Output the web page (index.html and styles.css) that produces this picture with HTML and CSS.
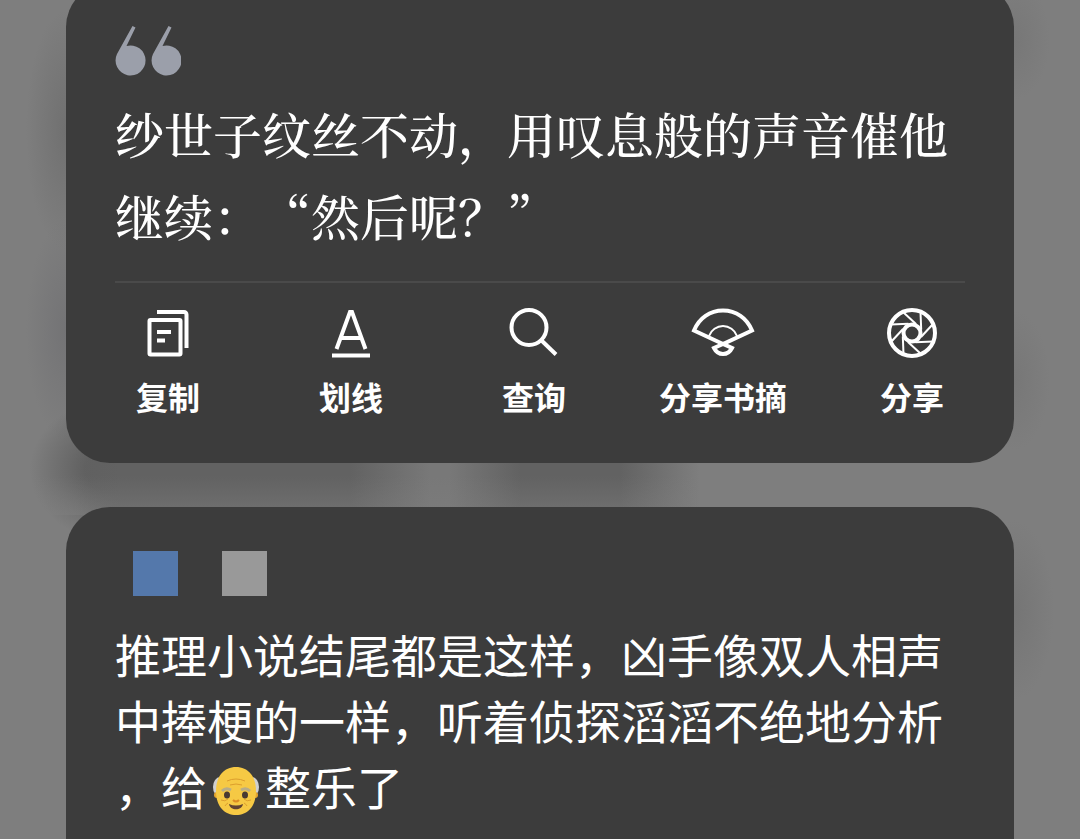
FILE: index.html
```html
<!DOCTYPE html>
<html lang="zh-CN">

<head>
  <title>书摘</title>
  <meta charset="UTF-8">
  <meta name="viewport" content="width=device-width, initial-scale=1">
  <link rel="stylesheet" href="styles.css">
</head>

<body>
  <main class="page">
    <section class="card quote">
      <svg class="quote-mark" viewBox="0 0 66 50" aria-hidden="true">
        <path d="M17.500 0l3 1.500-9 18.500A15 15 0 1 1 2 28z" />
        <path d="M53.500 0l3 1.500-9 18.500A15 15 0 1 1 38 28z" />
      </svg>
      <blockquote class="quote-text">纱世子纹丝不动，用叹息般的声音催他继续：“然后呢？”</blockquote>
      <div class="actions">
        <button class="action" type="button">
          <svg class="icon" viewBox="0 0 50 50" aria-hidden="true">
            <rect x="6.500" y="12" width="31" height="34.500" rx="1" />
            <path d="M14 4h27a2.500 2.500 0 0 1 2.500 2.500v33.500M14 24h14M14 32.500h8" />
          </svg>
          <span>复制</span>
        </button>
        <button class="action" type="button">
          <svg class="icon" viewBox="0 0 50 50" aria-hidden="true">
            <path d="M10.500 41L24 4h2l13.500 37M15 30h20M6 47.500h38" />
          </svg>
          <span>划线</span>
        </button>
        <button class="action" type="button">
          <svg class="icon" viewBox="0 0 50 50" aria-hidden="true">
            <circle cx="20" cy="19.500" r="17.500" />
            <path d="M32 32l15 14.500" />
          </svg>
          <span>查询</span>
        </button>
        <button class="action" type="button">
          <svg class="icon icon-wide" viewBox="0 0 64 50" aria-hidden="true">
            <path d="M32 36L3 22.500C8 10 19 2.500 32 2.500S56 10 61 22.500zM32 36l-9 4c2 4 5 6 9 6s7-2 9-6z" />
            <path class="thin" d="M18 28c2-6 8-10 14-10s12 4 14 10" />
          </svg>
          <span>分享书摘</span>
        </button>
        <button class="action" type="button">
          <svg class="icon" viewBox="0 0 50 50" aria-hidden="true">
            <circle cx="25" cy="25" r="23" />
            <circle cx="25" cy="25" r="8.500" />
            <g class="thin">
              <path d="M16 4l13 12" />
              <path d="M16 4l13 12" transform="rotate(45 25 25)" />
              <path d="M16 4l13 12" transform="rotate(90 25 25)" />
              <path d="M16 4l13 12" transform="rotate(135 25 25)" />
              <path d="M16 4l13 12" transform="rotate(180 25 25)" />
              <path d="M16 4l13 12" transform="rotate(225 25 25)" />
              <path d="M16 4l13 12" transform="rotate(270 25 25)" />
              <path d="M16 4l13 12" transform="rotate(315 25 25)" />
            </g>
          </svg>
          <span>分享</span>
        </button>
      </div>
    </section>

    <section class="card note">
      <div class="marks">
        <span class="mark mark-blue"></span>
        <span class="mark mark-gray"></span>
      </div>
      <p class="note-text">推理小说结尾都是这样，凶手像双人相声中捧梗的一样，听着侦探滔滔不绝地分析，给<svg class="emoji" viewBox="0 0 46 48" role="img" aria-label="老爷爷">
          <ellipse cx="7" cy="20" rx="7" ry="10" fill="#d0d0d0" />
          <ellipse cx="39" cy="20" rx="7" ry="10" fill="#d0d0d0" />
          <circle cx="4" cy="28" r="3" fill="#e5a52e" />
          <circle cx="42" cy="28" r="3" fill="#e5a52e" />
          <path d="M23 0C11 0 3 9 3 24c0 16 9 24 20 24s20-8 20-24C43 9 35 0 23 0z" fill="#f6c944" />
          <path d="M14 14q9-4 18 0M17 18q6-2 12 0M8 33q4 2 7-1M38 33q-4 2-7-1M15 36q-2 1-3 3M31 36q2 1 3 3" fill="none" stroke="#dc9e2d" />
          <path d="M9 24q4-4 9-1M28 23q5-3 9 1" fill="none" stroke="#b9ad86" stroke-width="3" />
          <ellipse cx="14" cy="28" rx="3" ry="3.500" fill="#493a32" />
          <ellipse cx="32" cy="28" rx="3" ry="3.500" fill="#493a32" />
          <path d="M20 33q3 3 6 0" fill="none" stroke="#dc8d25" stroke-width="2" />
          <path d="M16 37q7 3 14 0c-1 7-13 7-14 0z" fill="#614332" />
        </svg>整乐了</p>
    </section>
  </main>
</body>

</html>
```
FILE: styles.css
```css
* {
  margin: 0;
  padding: 0;
  box-sizing: border-box;
}

body {
  min-height: 100vh;
  overflow: hidden;
  color: #fff;
  font-family: "Noto Sans CJK SC", sans-serif;
  text-spacing-trim: space-all;
  /* blurred page showing through behind the cards */
  background:
    linear-gradient(#7e7e7e00 40%, #7e7e7e80) 0 450px / 100% 65px no-repeat,
    linear-gradient(90deg, #62626200 76px, #626262 120px, #626262 350px, #787878 430px, #787878 450px, #626262 520px, #626262 620px, #62626200 700px) 0 450px / 100% 65px no-repeat,
    radial-gradient(ellipse 80px 70px at 110px 470px, #606060 30%, #60606000),
    radial-gradient(ellipse 40px 120px at 66px 130px, #707070, #70707000),
    radial-gradient(ellipse 40px 110px at 66px 330px, #737375, #73737500),
    radial-gradient(ellipse 36px 60px at 1014px 40px, #777, #7770),
    radial-gradient(ellipse 36px 70px at 1014px 380px, #777, #7770),
    radial-gradient(ellipse 40px 90px at 1014px 610px, #757575, #75757500),
    #7e7e7e;
}

.page {
  display: flex;
  flex-direction: column;
  gap: 44px;
  margin-top: -17px;
  padding: 0 66px;
}

.card {
  padding: 43px 49px;
  border-radius: 44px;
  background-color: #3c3c3c;
}

.quote-mark {
  display: block;
  width: 66px;
  height: 50px;
  fill: #9b9faa;
}

.quote-text {
  margin-top: 16px;
  padding-bottom: 25px;
  border-bottom: 2px solid #4a4a4a;
  font-family: "Noto Serif CJK SC", "Noto Sans CJK SC", serif;
  font-size: 49px;
  font-weight: 500;
  line-height: 82px;
}

.actions {
  display: grid;
  grid-template-columns: repeat(3, minmax(0, 106fr)) minmax(0, 118fr) minmax(0, 106fr);
  column-gap: 77px;
  padding-top: 25px;
}

.action {
  display: flex;
  flex-direction: column;
  align-items: center;
  gap: 14px;
  border: none;
  background: none;
  color: inherit;
  font-family: inherit;
  font-size: 32px;
  font-weight: 700;
  line-height: 48px;
  white-space: nowrap;
  cursor: pointer;
}

.icon {
  width: 50px;
  height: 50px;
  fill: none;
  stroke: #fff;
  stroke-width: 4;
}

.icon-wide {
  width: 64px;
}

.thin {
  stroke-width: 2;
}

.note {
  min-height: 400px;
}

.marks {
  display: flex;
  gap: 44px;
  padding: 1px 18px 0;
}

.mark {
  width: 45px;
  height: 45px;
}

.mark-blue {
  background-color: #5478ab;
}

.mark-gray {
  background-color: #999;
}

.note-text {
  margin-top: 24px;
  font-size: 46px;
  line-height: 66px;
  line-break: anywhere;
}

.emoji {
  width: 46px;
  height: 48px;
  margin: 0 6px;
  vertical-align: -10px;
}
```
